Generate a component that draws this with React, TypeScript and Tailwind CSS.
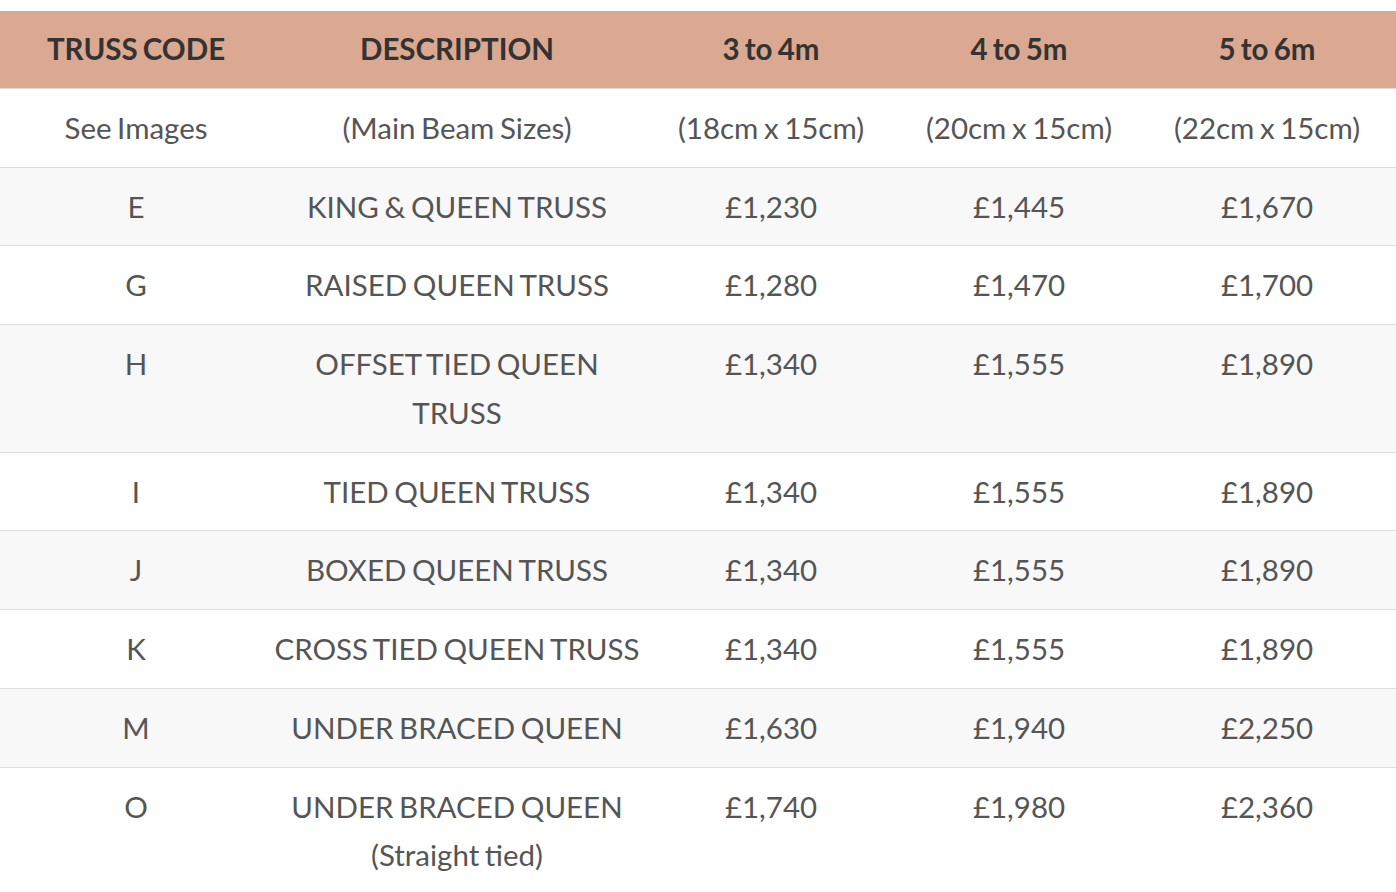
const HEAD = ['TRUSS CODE', 'DESCRIPTION', '3 to 4m', '4 to 5m', '5 to 6m'];

const ROWS: string[][] = [
  ['See Images', '(Main Beam Sizes)', '(18cm x 15cm)', '(20cm x 15cm)', '(22cm x 15cm)'],
  ['E', 'KING & QUEEN TRUSS', '£1,230', '£1,445', '£1,670'],
  ['G', 'RAISED QUEEN TRUSS', '£1,280', '£1,470', '£1,700'],
  ['H', 'OFFSET TIED QUEEN\nTRUSS', '£1,340', '£1,555', '£1,890'],
  ['I', 'TIED QUEEN TRUSS', '£1,340', '£1,555', '£1,890'],
  ['J', 'BOXED QUEEN TRUSS', '£1,340', '£1,555', '£1,890'],
  ['K', 'CROSS TIED QUEEN TRUSS', '£1,340', '£1,555', '£1,890'],
  ['M', 'UNDER BRACED QUEEN', '£1,630', '£1,940', '£2,250'],
  ['O', 'UNDER BRACED QUEEN\n(Straight tied)', '£1,740', '£1,980', '£2,360'],
];

const WIDTHS = ['w-[272px]', 'w-[370px]', 'w-[258px]', 'w-[238px]', 'w-[258px]'];

export default function App() {
  return (
    <div className="min-h-screen bg-white pt-[11px] font-['Lato',sans-serif]">
      <table className="w-[1396px] table-fixed border-collapse text-center text-[29.5px] leading-[48.75px] [word-spacing:-2px]">
        <colgroup>
          {WIDTHS.map((w, i) => (
            <col key={i} className={w} />
          ))}
        </colgroup>
        <thead>
          <tr className="bg-[#dba891] border-b border-[#dddddd]">
            {HEAD.map((h) => (
              <th key={h} className="py-[14px] px-0 font-bold text-[#333333] whitespace-nowrap">
                {h}
              </th>
            ))}
          </tr>
        </thead>
        <tbody>
          {ROWS.map((r, i) => (
            <tr
              key={r[0]}
              className={`border-b border-[#dddddd] ${i % 2 === 0 ? 'bg-white' : 'bg-[#f8f8f8]'}`}
            >
              {r.map((c, j) => (
                <td
                  key={j}
                  className="pt-[15px] pb-[14px] px-0 align-top text-[#555555] whitespace-pre"
                >
                  {c}
                </td>
              ))}
            </tr>
          ))}
        </tbody>
      </table>
    </div>
  );
}
